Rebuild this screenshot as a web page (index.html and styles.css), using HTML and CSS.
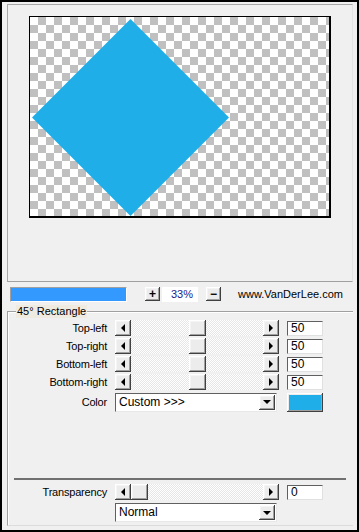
FILE: index.html
```html
<!DOCTYPE html>
<html>
<head>
<meta charset="utf-8">
<link rel="stylesheet" href="styles.css">
</head>
<body>
<div class="frame">
  <div class="preview">
    <div class="canvas">
      <svg class="shape" width="299" height="199" viewBox="0 0 299 199">
        <polygon points="100.5,2 2,100.5 100.5,199 199,100.5" fill="#1faee7"/>
      </svg>
    </div>
  </div>

  <div class="barrow">
    <div class="progress"></div>
    <div class="btn small plus">+</div>
    <div class="zoomval">33%</div>
    <div class="btn small minus">−</div>
    <div class="link">www.VanDerLee.com</div>
  </div>

  <div class="group">
    <div class="legend">45° Rectangle</div>

    <div class="row">
      <div class="lbl">Top-left</div>
      <div class="slider">
        <div class="btn arrow"><span class="tri-left"></span></div>
        <div class="track"><div class="btn thumb" style="margin-left:58px"></div></div>
        <div class="btn arrow"><span class="tri-right"></span></div>
      </div>
      <div class="val">50</div>
    </div>
    <div class="row">
      <div class="lbl">Top-right</div>
      <div class="slider">
        <div class="btn arrow"><span class="tri-left"></span></div>
        <div class="track"><div class="btn thumb" style="margin-left:58px"></div></div>
        <div class="btn arrow"><span class="tri-right"></span></div>
      </div>
      <div class="val">50</div>
    </div>
    <div class="row">
      <div class="lbl">Bottom-left</div>
      <div class="slider">
        <div class="btn arrow"><span class="tri-left"></span></div>
        <div class="track"><div class="btn thumb" style="margin-left:58px"></div></div>
        <div class="btn arrow"><span class="tri-right"></span></div>
      </div>
      <div class="val">50</div>
    </div>
    <div class="row">
      <div class="lbl">Bottom-right</div>
      <div class="slider">
        <div class="btn arrow"><span class="tri-left"></span></div>
        <div class="track"><div class="btn thumb" style="margin-left:58px"></div></div>
        <div class="btn arrow"><span class="tri-right"></span></div>
      </div>
      <div class="val">50</div>
    </div>

    <div class="row colorrow">
      <div class="lbl">Color</div>
      <div class="select">
        <div class="seltext">Custom &gt;&gt;&gt;</div>
        <div class="btn selbtn"><span class="tri-down"></span></div>
      </div>
      <div class="swatch"><div class="swatch-fill"></div></div>
    </div>

    <div class="sep"></div>

    <div class="row">
      <div class="lbl">Transparency</div>
      <div class="slider">
        <div class="btn arrow"><span class="tri-left"></span></div>
        <div class="track"><div class="btn thumb" style="margin-left:0px"></div></div>
        <div class="btn arrow"><span class="tri-right"></span></div>
      </div>
      <div class="val">0</div>
    </div>
    <div class="row moderow">
      <div class="lbl"></div>
      <div class="select">
        <div class="seltext">Normal</div>
        <div class="btn selbtn"><span class="tri-down"></span></div>
      </div>
    </div>
  </div>
</div>
</body>
</html>
```

FILE: styles.css
```css
html, body {
  margin: 0;
  padding: 0;
}
body {
  width: 359px;
  height: 532px;
  background: #f0f0f0;
  font-family: "Liberation Sans", Arial, sans-serif;
  font-size: 11px;
  color: #000;
  overflow: hidden;
}
.frame {
  box-sizing: border-box;
  width: 359px;
  height: 532px;
  border: 2px solid #000;
  padding: 2px 4px 0 5px;
  display: flex;
  flex-direction: column;
  background: #f0f0f0;
}
.preview {
  box-sizing: border-box;
  width: 346px;
  height: 278px;
  flex: none;
  border: 1px solid #a8a8a8;
  border-right-color: #e4e4e4;
  border-bottom-color: #a0a0a0;
  padding-top: 11px;
  display: flex;
  justify-content: center;
  align-items: flex-start;
}
.canvas {
  box-sizing: border-box;
  width: 302px;
  height: 202px;
  border: 1px solid #000;
  border-right-width: 2px;
  border-bottom-width: 2px;
  background: repeating-conic-gradient(#c0c0c0 0 25%, #ffffff 0 50%) 0 0 / 16px 16px;
  display: flex;
}
.shape {
  display: block;
}

/* zoom bar row */
.barrow {
  display: flex;
  align-items: center;
  height: 16px;
  margin-top: 4px;
  flex: none;
}
.progress {
  box-sizing: border-box;
  margin-left: 3px;
  width: 117px;
  height: 15px;
  border: 1px solid;
  border-color: #a0a0a0 #ffffff #ffffff #a0a0a0;
  background: #3399ff;
}
.btn {
  box-sizing: border-box;
  background: #ececec;
  box-shadow: inset -1px -1px #404040, inset 1px 1px #ffffff, inset -2px -2px #a0a0a0, inset 2px 2px #f4f4f4;
  display: flex;
  align-items: center;
  justify-content: center;
  flex: none;
}
.small {
  width: 15px;
  height: 14px;
  font-size: 12px;
  font-weight: bold;
  line-height: 14px;
}
.plus { margin-left: 18px; }
.zoomval {
  margin-left: 2px;
  width: 36px;
  height: 15px;
  line-height: 15px;
  background: #ffffff;
  color: #1a1a8c;
  text-align: left;
  padding-left: 9px;
  box-sizing: border-box;
}
.minus { margin-left: 8px; }
.link {
  margin-left: 17px;
  white-space: nowrap;
}

/* group */
.group {
  position: relative;
  box-sizing: border-box;
  margin-top: 9px;
  width: 346px;
  height: 215px;
  flex: none;
  border-top: 1px solid #a0a0a0;
  border-left: 1px solid #a0a0a0;
  border-bottom: 1px solid #dcdcdc;
  box-shadow: inset 1px 1px #ffffff;
  padding-top: 8px;
  display: flex;
  flex-direction: column;
}
.legend {
  position: absolute;
  left: 8px;
  top: -7px;
  padding: 0 1px;
  background: #efebe0;
  line-height: 13px;
}
.row {
  display: grid;
  grid-template-columns: 99px 164px 36px;
  column-gap: 8px;
  align-items: center;
  height: 16px;
  margin-bottom: 2px;
}
.lbl {
  text-align: right;
  white-space: nowrap;
  letter-spacing: -0.2px;
}
.slider {
  display: flex;
  height: 16px;
}
.arrow {
  width: 16px;
  height: 16px;
}
.track {
  flex: 1;
  height: 16px;
  display: flex;
  background: repeating-conic-gradient(#ffffff 0 25%, #e6e6e6 0 50%) 0 0 / 2px 2px;
}
.thumb {
  width: 17px;
  height: 16px;
}
.tri-left {
  width: 0;
  height: 0;
  border-top: 4px solid transparent;
  border-bottom: 4px solid transparent;
  border-right: 4px solid #000;
}
.tri-right {
  width: 0;
  height: 0;
  border-top: 4px solid transparent;
  border-bottom: 4px solid transparent;
  border-left: 4px solid #000;
}
.tri-down {
  width: 0;
  height: 0;
  border-left: 4px solid transparent;
  border-right: 4px solid transparent;
  border-top: 4px solid #000;
}
.val {
  box-sizing: border-box;
  height: 15px;
  background: #ffffff;
  border: 1px solid;
  border-color: #606060 #e0e0e0 #e0e0e0 #606060;
  padding-left: 3px;
  line-height: 13px;
  font-size: 12px;
}
.colorrow {
  height: 20px;
  margin-top: 0;
}
.select {
  box-sizing: border-box;
  width: 162px;
  height: 19px;
  background: #ffffff;
  border: 1px solid;
  border-color: #606060 #e8e8e8 #e8e8e8 #606060;
  display: flex;
  align-items: center;
  padding: 0 1px 0 3px;
}
.seltext {
  flex: 1;
  font-size: 12px;
  line-height: 15px;
}
.selbtn {
  width: 16px;
  height: 15px;
}
.swatch {
  box-sizing: border-box;
  height: 19px;
  padding: 2px;
  background: #ececec;
  box-shadow: inset -1px -1px #404040, inset 1px 1px #ffffff, inset -2px -2px #a0a0a0;
}
.swatch-fill {
  width: 100%;
  height: 100%;
  background: #1faee7;
}
.sep {
  margin-top: 64px;
  margin-left: 6px;
  width: 332px;
  height: 2px;
  background: #707070;
  margin-bottom: 4px;
  flex: none;
}
.moderow {
  margin-top: 1px;
  height: 19px;
}
.moderow .lbl { height: 1px; }
```
